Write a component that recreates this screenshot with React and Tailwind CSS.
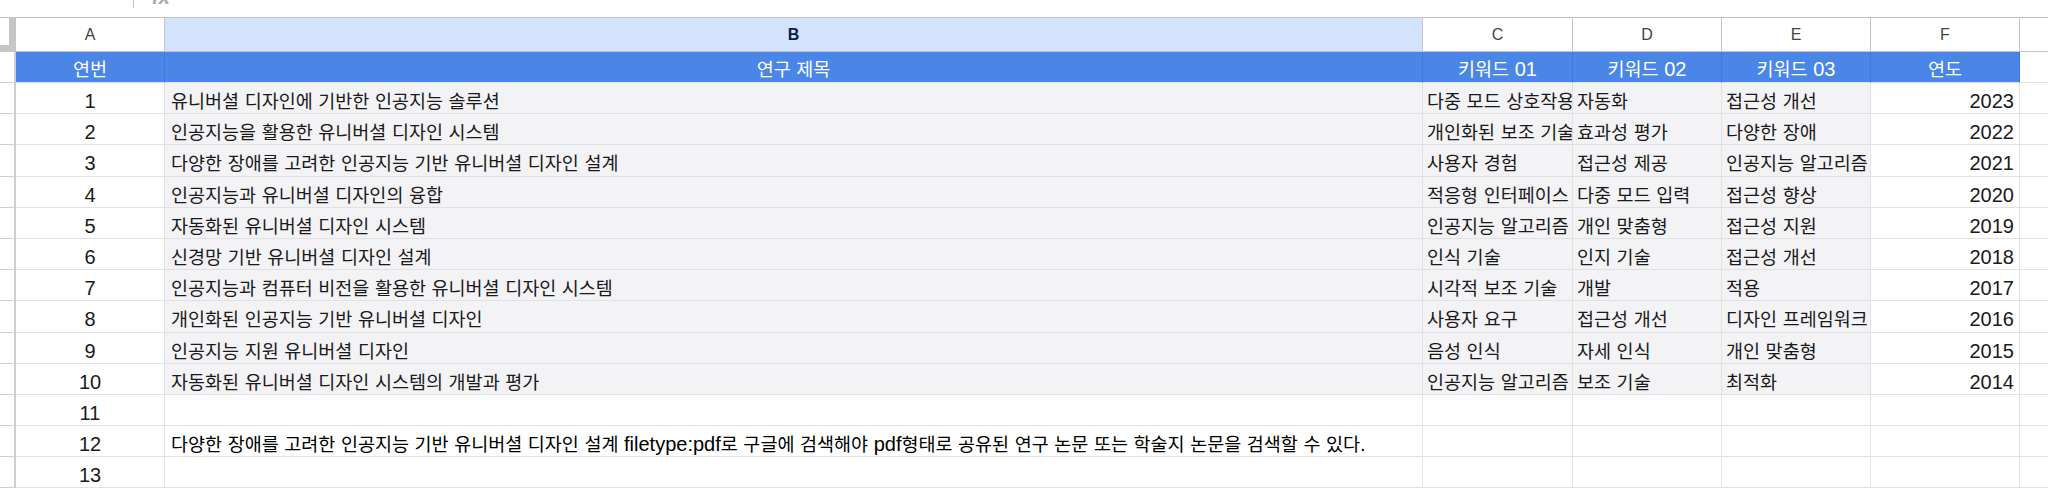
const rows = [
  ["1", "유니버셜 디자인에 기반한 인공지능 솔루션", "다중 모드 상호작용", "자동화", "접근성 개선", "2023"],
  ["2", "인공지능을 활용한 유니버셜 디자인 시스템", "개인화된 보조 기술", "효과성 평가", "다양한 장애", "2022"],
  ["3", "다양한 장애를 고려한 인공지능 기반 유니버셜 디자인 설계", "사용자 경험", "접근성 제공", "인공지능 알고리즘", "2021"],
  ["4", "인공지능과 유니버셜 디자인의 융합", "적응형 인터페이스", "다중 모드 입력", "접근성 향상", "2020"],
  ["5", "자동화된 유니버셜 디자인 시스템", "인공지능 알고리즘", "개인 맞춤형", "접근성 지원", "2019"],
  ["6", "신경망 기반 유니버셜 디자인 설계", "인식 기술", "인지 기술", "접근성 개선", "2018"],
  ["7", "인공지능과 컴퓨터 비전을 활용한 유니버셜 디자인 시스템", "시각적 보조 기술", "개발", "적용", "2017"],
  ["8", "개인화된 인공지능 기반 유니버셜 디자인", "사용자 요구", "접근성 개선", "디자인 프레임워크", "2016"],
  ["9", "인공지능 지원 유니버셜 디자인", "음성 인식", "자세 인식", "개인 맞춤형", "2015"],
  ["10", "자동화된 유니버셜 디자인 시스템의 개발과 평가", "인공지능 알고리즘", "보조 기술", "최적화", "2014"],
];

const note =
  "다양한 장애를 고려한 인공지능 기반 유니버셜 디자인 설계 filetype:pdf로 구글에 검색해야 pdf형태로 공유된 연구 논문 또는 학술지 논문을 검색할 수 있다.";

// hangul runs are set a bit smaller so they keep the width of the original font
const Ko = ({ text }) =>
  text.split(/([\uAC00-\uD7A3]+)/).map((part, i) =>
    i % 2 ? (
      <span key={i} className="text-[18.5px]">
        {part}
      </span>
    ) : (
      part
    )
  );

const RowHead = () => (
  <div className="w-[16px] shrink-0 border-r-2 border-b border-[#cfcfcf] bg-white" />
);

const Cell = ({ w, className = "", children }) => (
  <div
    className={`${w} shrink-0 overflow-hidden whitespace-nowrap border-r border-b border-[#e1e1e4] pt-[6px] leading-[25px] ${className}`}
  >
    {children}
  </div>
);

const App = () => {
  return (
    <div className="h-[489px] w-[2048px] overflow-hidden bg-white font-['Liberation_Sans','Noto_Sans_CJK_KR',sans-serif] text-[20px] text-[#1a1a1a]">
      {/* formula bar edge */}
      <div className="flex h-[17px] overflow-hidden">
        <div className="w-[133px] shrink-0" />
        <div className="h-[8px] w-px bg-[#c4c4c4]" />
        <div className="-mt-[14px] ml-[18px] text-[20px] font-bold italic leading-[22px] text-[#a8a8a8]">
          fx
        </div>
      </div>

      {/* column letters */}
      <div className="flex h-[35px] border-t border-[#c4c4c4] text-[16px] text-[#444]">
        <div className="w-[16px] shrink-0 border-r-[7px] border-b-[7px] border-[#c6c6c6] bg-white" />
        {[
          ["w-[149px]", "A"],
          ["w-[1258px]", "B"],
          ["w-[150px]", "C"],
          ["w-[149px]", "D"],
          ["w-[149px]", "E"],
          ["w-[149px]", "F"],
        ].map(([w, l]) => (
          <div
            key={l}
            className={`${w} flex shrink-0 items-center justify-center border-r border-b border-[#c4c4c4] ${
              l === "B" ? "bg-[#d3e3fd] font-bold text-[#0b1d45]" : "bg-white"
            }`}
          >
            {l}
          </div>
        ))}
        <div className="flex-1 border-b border-[#c4c4c4]" />
      </div>

      {/* header row */}
      <div className="flex h-[31px] text-white">
        <RowHead />
        {[
          ["w-[149px]", "연번"],
          ["w-[1258px]", "연구 제목"],
          ["w-[150px]", "키워드 01"],
          ["w-[149px]", "키워드 02"],
          ["w-[149px]", "키워드 03"],
          ["w-[149px]", "연도"],
        ].map(([w, t]) => (
          <div
            key={t}
            className={`${w} shrink-0 border-r border-b border-r-[#3f7ad9] border-b-[#e1e1e4] bg-[#4a86e8] pt-[5px] text-center leading-[25px]`}
          >
            <Ko text={t} />
          </div>
        ))}
        <div className="flex-1 border-b border-[#e1e1e4]" />
      </div>

      {/* data rows */}
      {rows.map((r) => (
        <div key={r[0]} className="flex h-[31.2px]">
          <RowHead />
          <Cell w="w-[149px]" className="text-center">
            {r[0]}
          </Cell>
          <Cell w="w-[1258px]" className="bg-[#f3f3f5] pl-[6px]">
            <Ko text={r[1]} />
          </Cell>
          <Cell w="w-[150px]" className="bg-[#f3f3f5] pl-[4px]">
            <Ko text={r[2]} />
          </Cell>
          <Cell w="w-[149px]" className="bg-[#f3f3f5] pl-[4px]">
            <Ko text={r[3]} />
          </Cell>
          <Cell w="w-[149px]" className="bg-[#f3f3f5] pl-[4px]">
            <Ko text={r[4]} />
          </Cell>
          <Cell w="w-[149px]" className="pr-[5px] text-right">
            {r[5]}
          </Cell>
          <div className="flex-1 border-b border-[#e1e1e4]" />
        </div>
      ))}

      {["11", "12", "13"].map((n) => (
        <div key={n} className="flex h-[31.2px]">
          <RowHead />
          <Cell w="w-[149px]" className="text-center">
            {n}
          </Cell>
          <Cell w="w-[1258px]" className="pl-[6px] text-black">
            {n === "12" ? <Ko text={note} /> : null}
          </Cell>
          <Cell w="w-[150px]" />
          <Cell w="w-[149px]" />
          <Cell w="w-[149px]" />
          <Cell w="w-[149px]" />
          <div className="flex-1 border-b border-[#e1e1e4]" />
        </div>
      ))}
    </div>
  );
};

export default App;
